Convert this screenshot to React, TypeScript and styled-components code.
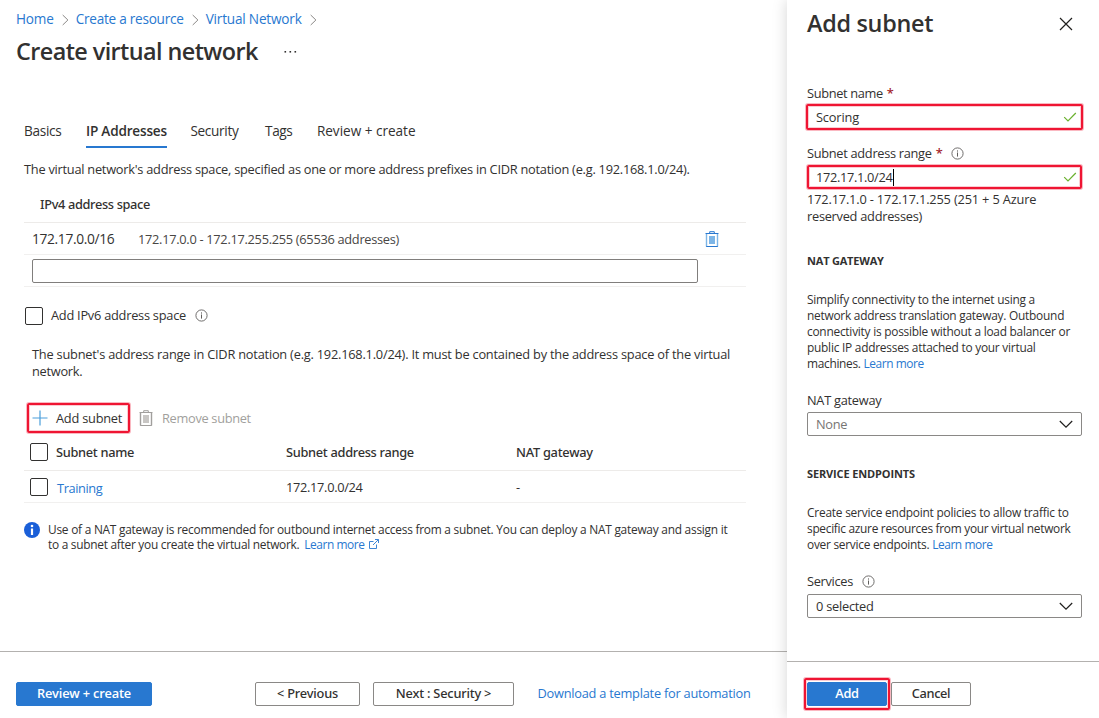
import React from 'react';
import styled, { createGlobalStyle } from 'styled-components';

const GlobalStyle = createGlobalStyle`
  * { box-sizing: border-box; }
  body { margin: 0; background: #fff; overflow: hidden; }
`;

const blue = '#2878d0';
const ink = '#323130';
const line = '#edebe9';

const Page = styled.div`
  display: flex;
  width: 1099px;
  height: 718px;
  overflow: hidden;
  font: 400 12.8px/18px 'Open Sans', 'Noto Sans', sans-serif;
  letter-spacing: -0.27px;
  color: ${ink};
`;

const Text = styled.span<{ $ls?: number; $semi?: boolean; $muted?: boolean }>`
  letter-spacing: ${p => p.$ls ?? -0.27}px;
  font-weight: ${p => (p.$semi ? 600 : 400)};
  color: ${p => (p.$muted ? '#a19f9d' : 'inherit')};
  white-space: nowrap;
`;

const Medium = styled.span<{ $ls: number }>`
  font-family: 'Noto Sans', 'Open Sans', sans-serif;
  font-weight: 500;
  letter-spacing: ${p => p.$ls}px;
  white-space: nowrap;
`;

const Link = styled.a<{ $ls?: number }>`
  letter-spacing: ${p => p.$ls ?? -0.27}px;
  color: ${blue};
  text-decoration: none;
  white-space: nowrap;
  cursor: pointer;
`;

const Main = styled.main`
  display: flex;
  flex-direction: column;
  width: 787px;
`;

const Breadcrumb = styled.nav`
  display: flex;
  align-items: center;
  height: 38px;
  padding-left: 16px;
  font-size: 13.6px;
`;

const Separator = styled.svg`
  width: 7px;
  height: 12px;
  margin: 1px 7px 0 8px;
`;

const TitleRow = styled.header`
  display: flex;
  align-items: center;
  height: 26px;
  padding-left: 16px;
  gap: 26px;
`;

const Title = styled.h1<{ $ls: number }>`
  margin: 0;
  font-size: 23.4px;
  font-weight: 600;
  line-height: 26px;
  letter-spacing: ${p => p.$ls}px;
`;

const Tabs = styled.div`
  display: flex;
  height: 32px;
  margin: 52px 0 0 24px;
  gap: 24.5px;
  font-size: 13.6px;
`;

const Tab = styled.div<{ $active?: boolean; $after?: number }>`
  display: flex;
  align-items: center;
  margin-right: ${p => p.$after ?? 0}px;
  border-bottom: 2px solid ${p => (p.$active ? blue : 'transparent')};
`;

const Content = styled.section`
  width: 722px;
  margin: 13px 0 0 24px;
  flex: 1;
`;

const Paragraph = styled.p<{ $top?: number; $left?: number }>`
  margin: ${p => p.$top ?? 0}px 0 0 ${p => p.$left ?? 0}px;
  line-height: 17px;
`;

const SpaceHeader = styled.div`
  display: flex;
  align-items: center;
  height: 37px;
  margin-top: 8px;
  padding-left: 16px;
  border-bottom: 1px solid ${line};
`;

const SpaceRow = styled.div`
  display: flex;
  align-items: center;
  height: 32px;
  padding: 0 8px;
  border-bottom: 1px solid #f1f0ef;
`;

const SpacePrefix = styled.div`
  width: 106px;
  font-size: 13.8px;
`;

const SpaceRange = styled.div`
  flex: 1;
  color: #484644;
`;

const DeleteIcon = styled.svg`
  width: 14px;
  height: 17px;
  margin: 1px 19px 0 0;
`;

const AddressInput = styled.div`
  width: 666px;
  height: 24px;
  border: 1px solid #807e7c;
  border-radius: 2px;
`;

const Option = styled.div`
  display: flex;
  align-items: center;
  height: 20px;
  margin: 19px 0 0 1px;
`;

const OptionLabel = styled.div`
  display: flex;
  align-items: center;
  height: 18px;
  margin-bottom: 2px;
`;

const Checkbox = styled.span<{ $gap: number }>`
  flex: none;
  width: 18px;
  height: 18px;
  margin-right: ${p => p.$gap}px;
  border: 1px solid ${ink};
  border-radius: 2px;
`;

const InfoGlyph = styled.svg<{ $gap: number }>`
  flex: none;
  width: 13px;
  height: 13px;
  margin-left: ${p => p.$gap}px;
`;

const Toolbar = styled.div`
  display: flex;
  align-items: center;
  height: 28px;
  margin-top: 24px;
  padding-left: 8px;
`;

const Action = styled.div<{ $width?: number; $gap: number }>`
  position: relative;
  display: flex;
  align-items: center;
  gap: ${p => p.$gap}px;
  width: ${p => (p.$width ? `${p.$width}px` : 'auto')};
`;

const Callout = styled.span<{ $inset: string }>`
  position: absolute;
  inset: ${p => p.$inset};
  border: 2px solid #ef1533;
  border-radius: 2px;
  box-shadow: 0 0 0 1px rgba(239, 21, 51, 0.3), inset 0 0 0 1px rgba(239, 21, 51, 0.22);
  pointer-events: none;
`;

const SubnetGrid = styled.div<{ $height: number; $line: string }>`
  display: grid;
  grid-template-columns: 26px 230px 230px 1fr;
  align-items: center;
  height: ${p => p.$height}px;
  padding-left: 6px;
  margin-top: ${p => (p.$height > 32 ? 2 : 0)}px;
  border-bottom: 1px solid ${p => p.$line};
`;

const SubnetLink = styled.div`
  padding: 2px 0 0 1px;
`;

const Notice = styled.div`
  display: flex;
  gap: 8px;
  margin-top: 19px;
  font-size: 11.9px;
  line-height: 15px;
`;

const NoticeIcon = styled.svg`
  flex: none;
  width: 16px;
  height: 16px;
`;

const NoticeLink = styled(Link)`
  margin-left: 2px;
`;

const ExternalIcon = styled.svg`
  width: 10px;
  height: 10px;
  margin-left: 5px;
`;

const MainFooter = styled.footer`
  display: flex;
  align-items: flex-start;
  height: 67px;
  padding: 30px 0 0 16px;
  border-top: 1px solid #b3b1af;
`;

const Button = styled.button<{ $width: number; $primary?: boolean; $after?: number }>`
  position: relative;
  flex: none;
  display: flex;
  align-items: center;
  justify-content: center;
  width: ${p => p.$width}px;
  height: 24px;
  padding: 0 0 2px;
  margin-right: ${p => p.$after ?? 0}px;
  border: 1px solid ${p => (p.$primary ? blue : '#8a8886')};
  border-radius: 2px;
  background: ${p => (p.$primary ? blue : '#fff')};
  color: ${p => (p.$primary ? '#fff' : ink)};
  font: inherit;
  line-height: 20px;
`;

const FooterLink = styled.div`
  line-height: 23px;
`;

const Panel = styled.aside`
  position: relative;
  display: flex;
  flex-direction: column;
  width: 312px;
  background: #fff;
  box-shadow: 0 0 14px rgba(0, 0, 0, 0.17);
`;

const PanelHeader = styled.header`
  display: flex;
  justify-content: space-between;
  align-items: center;
  height: 48px;
  padding: 0 26px 2px 20px;
`;

const CloseIcon = styled.svg`
  width: 14px;
  height: 14px;
  margin-top: 2px;
`;

const PanelBody = styled.div`
  flex: 1;
  width: 275px;
  margin-left: 20px;
`;

const Label = styled.label<{ $top: number; $bottom: number }>`
  display: flex;
  align-items: center;
  height: 18px;
  margin: ${p => p.$top}px 0 ${p => p.$bottom}px;
`;

const Required = styled.span`
  margin-left: 4px;
  color: #a4262c;
  font-weight: 600;
`;

const Field = styled.div`
  position: relative;
  display: flex;
  align-items: center;
  justify-content: space-between;
  height: 24px;
  padding: 0 5px 0 9px;
`;

const Value = styled.span`
  display: flex;
  align-items: center;
`;

const Caret = styled.span`
  width: 1px;
  height: 17px;
  margin-left: 1px;
  background: #000;
`;

const Glyph = styled.svg`
  width: 14px;
  height: 12px;
`;

const Heading = styled.h2<{ $top: number; $ls: number }>`
  margin: ${p => p.$top}px 0 0;
  font-size: 11px;
  font-weight: 700;
  line-height: 16px;
  letter-spacing: ${p => p.$ls}px;
`;

const Description = styled.p`
  margin: 22px 0 0;
  font-size: 11.9px;
  line-height: 16px;
  letter-spacing: -0.24px;
`;

const Select = styled.div<{ $muted?: boolean }>`
  display: flex;
  align-items: center;
  justify-content: space-between;
  height: 24px;
  padding: 0 8px;
  border: 1px solid #8a8886;
  border-radius: 2px;
  color: ${p => (p.$muted ? '#777573' : ink)};
`;

const PanelFooter = styled.footer`
  display: flex;
  height: 57px;
  padding: 20px 0 0 20px;
  border-top: 1px solid #b3b1af;
`;

const Crumb = () => (
  <Separator viewBox="0 0 7 12">
    <path d="M0.7 1 L5.9 6 L0.7 11" fill="none" stroke="#8a8886" strokeWidth="1" />
  </Separator>
);

const Info = ({ gap }: { gap: number }) => (
  <InfoGlyph $gap={gap} viewBox="0 0 13 13">
    <circle cx="6.5" cy="6.5" r="5.6" fill="none" stroke="#605e5c" strokeWidth="0.9" />
    <path d="M6.5 5.5V9.6M6.5 3.4V4.6" stroke="#605e5c" strokeWidth="1" />
  </InfoGlyph>
);

const Trash = ({ stroke, fill, side }: { stroke: string; fill: string; side: string }) => (
  <>
    <path d="M1.5 3V15.5M12.5 3V15.5" stroke={side} strokeWidth="1.4" />
    <path d="M0.5 2.5H13.5M1.2 15.5H12.8M4.7 2.5V0.7H9.3V2.5" fill="none" stroke={stroke} />
    <rect x="4" y="5" width="6" height="8" fill={fill} />
  </>
);

const Check = () => (
  <Glyph viewBox="0 0 14 12">
    <path d="M1.2 6.2L5 10L12.8 2" fill="none" stroke="#6bb12f" strokeWidth="1.2" />
  </Glyph>
);

const Chevron = () => (
  <Glyph viewBox="0 0 14 12">
    <path d="M0.8 3L7 9.2L13.2 3" fill="none" stroke="#201f1e" strokeWidth="1.2" />
  </Glyph>
);

export default function App() {
  return (
    <Page>
      <GlobalStyle />
      <Main>
        <Breadcrumb>
          <Link $ls={-0.2}>Home</Link>
          <Crumb />
          <Link $ls={-0.25}>Create a resource</Link>
          <Crumb />
          <Link $ls={-0.2}>Virtual Network</Link>
          <Crumb />
        </Breadcrumb>
        <TitleRow>
          <Title $ls={-0.58}>Create virtual network</Title>
          <svg width="13" height="3" viewBox="0 0 13 3" fill={ink}>
            <rect x="0.5" y="1" width="1.6" height="1.6" />
            <rect x="5.5" y="1" width="1.6" height="1.6" />
            <rect x="10.5" y="1" width="1.6" height="1.6" />
          </svg>
        </TitleRow>
        <Tabs>
          <Tab><Text $ls={-0.3}>Basics</Text></Tab>
          <Tab $active $after={-1}><Text $semi $ls={-0.2}>IP Addresses</Text></Tab>
          <Tab $after={2}><Text $ls={-0.3}>Security</Text></Tab>
          <Tab><Text $ls={-0.4}>Tags</Text></Tab>
          <Tab><Text $ls={-0.02}>Review + create</Text></Tab>
        </Tabs>
        <Content>
          <Paragraph>
            <Text $ls={-0.25}>The virtual network's address space, specified as one or more address prefixes in CIDR notation (e.g. 192.168.1.0/24).</Text>
          </Paragraph>
          <SpaceHeader><Medium $ls={-0.35}>IPv4 address space</Medium></SpaceHeader>
          <SpaceRow>
            <SpacePrefix><Text $ls={-0.36}>172.17.0.0/16</Text></SpacePrefix>
            <SpaceRange><Text $ls={-0.29}>172.17.0.0 - 172.17.255.255 (65536 addresses)</Text></SpaceRange>
            <DeleteIcon viewBox="0 0 14 17">
              <Trash stroke={blue} fill="#7db5e6" side="#7db5e6" />
            </DeleteIcon>
          </SpaceRow>
          <SpaceRow><AddressInput /></SpaceRow>
          <Option>
            <Checkbox $gap={8} />
            <OptionLabel>
              <Text $ls={-0.25}>Add IPv6 address space</Text>
              <Info gap={9} />
            </OptionLabel>
          </Option>
          <Paragraph $top={20} $left={8}>
            <Text $ls={-0.22}>The subnet's address range in CIDR notation (e.g. 192.168.1.0/24). It must be contained by the address space of the virtual</Text>
            <br />
            <Text>network.</Text>
          </Paragraph>
          <Toolbar>
            <Action $width={107} $gap={7}>
              <svg width="17" height="17" viewBox="0 0 17 17">
                <path d="M8 0.5V15.5M0.5 8H15.5" stroke="#4a9edb" strokeWidth="1.2" />
              </svg>
              <Text $ls={-0.23}>Add subnet</Text>
              <Callout $inset="-6px 9px -6px -5px" />
            </Action>
            <Action $gap={9}>
              <svg width="14" height="17" viewBox="0 0 14 17">
                <Trash stroke="#a19f9d" fill="#c8c6c4" side="#a19f9d" />
              </svg>
              <Text $muted $ls={-0.31}>Remove subnet</Text>
            </Action>
          </Toolbar>
          <SubnetGrid $height={37} $line={line}>
            <Checkbox $gap={0} />
            <Medium $ls={-0.3}>Subnet name</Medium>
            <Medium $ls={-0.3}>Subnet address range</Medium>
            <Medium $ls={-0.25}>NAT gateway</Medium>
          </SubnetGrid>
          <SubnetGrid $height={32} $line="#f1f0ef">
            <Checkbox $gap={0} />
            <SubnetLink><Link $ls={-0.4}>Training</Link></SubnetLink>
            <Text $ls={-0.31}>172.17.0.0/24</Text>
            <Text>-</Text>
          </SubnetGrid>
          <Notice>
            <NoticeIcon viewBox="0 0 16 16">
              <circle cx="8" cy="8" r="8" fill="#1a5fd8" />
              <path d="M8 6.5V13" stroke="#fff" strokeWidth="2.2" />
              <circle cx="8" cy="4" r="1.3" fill="#fff" />
            </NoticeIcon>
            <div>
              <Text $ls={-0.24}>Use of a NAT gateway is recommended for outbound internet access from a subnet. You can deploy a NAT gateway and assign it</Text>
              <br />
              <Text>to a subnet after you create the virtual network. </Text>{' '}
              <NoticeLink $ls={-0.42}>
                Learn more
                <ExternalIcon viewBox="0 0 10 10">
                  <path d="M4.5 2.5H0.5V9.5H7.5V5.5M6 0.5H9.5V4M9.3 0.7L4 6" fill="none" stroke={blue} strokeWidth="0.9" />
                </ExternalIcon>
              </NoticeLink>
            </div>
          </Notice>
        </Content>
        <MainFooter>
          <Button $primary $width={136} $after={103}><Text $semi $ls={-0.18}>Review + create</Text></Button>
          <Button $width={105} $after={13}><Medium $ls={-0.2}>&lt; Previous</Medium></Button>
          <Button $width={141} $after={23.5}><Medium $ls={-0.2}>Next : Security &gt;</Medium></Button>
          <FooterLink><Link $ls={-0.24}>Download a template for automation</Link></FooterLink>
        </MainFooter>
      </Main>
      <Panel>
        <PanelHeader>
          <Title $ls={-0.29}>Add subnet</Title>
          <CloseIcon viewBox="0 0 14 14">
            <path d="M1 1L13 13M13 1L1 13" stroke="#201f1e" strokeWidth="1.2" />
          </CloseIcon>
        </PanelHeader>
        <PanelBody>
          <Label $top={36} $bottom={3}>
            <Text $ls={-0.35}>Subnet name</Text><Required>*</Required>
          </Label>
          <Field>
            <Text $ls={-0.17}>Scoring</Text>
            <Check />
            <Callout $inset="-1px -1px -1px -1px" />
          </Field>
          <Label $top={15} $bottom={3}>
            <Text $ls={-0.3}>Subnet address range</Text><Required>*</Required><Info gap={9} />
          </Label>
          <Field>
            <Value><Text $ls={-0.32}>172.17.1.0/24</Text><Caret /></Value>
            <Check />
            <Callout $inset="0" />
          </Field>
          <Paragraph $top={2}>
            <Text $ls={-0.17}>172.17.1.0 - 172.17.1.255 (251 + 5 Azure</Text>
            <br />
            <Text>reserved addresses)</Text>
          </Paragraph>
          <Heading $top={28} $ls={-0.2}>NAT GATEWAY</Heading>
          <Description>
            <Text $ls={-0.24}>Simplify connectivity to the internet using a</Text><br />
            <Text $ls={-0.24}>network address translation gateway. Outbound</Text><br />
            <Text $ls={-0.24}>connectivity is possible without a load balancer or</Text><br />
            <Text $ls={-0.24}>public IP addresses attached to your virtual</Text><br />
            <Text $ls={-0.3}>machines.</Text> <Link $ls={-0.42}>Learn more</Link>
          </Description>
          <Label $top={20} $bottom={3}><Text>NAT gateway</Text></Label>
          <Select $muted><Text>None</Text><Chevron /></Select>
          <Heading $top={30} $ls={-0.14}>SERVICE ENDPOINTS</Heading>
          <Description>
            <Text $ls={-0.21}>Create service endpoint policies to allow traffic to</Text><br />
            <Text $ls={-0.29}>specific azure resources from your virtual network</Text><br />
            <Text $ls={-0.26}>over service endpoints.</Text> <Link $ls={-0.42}>Learn more</Link>
          </Description>
          <Label $top={20} $bottom={4}><Text $ls={-0.31}>Services</Text><Info gap={9} /></Label>
          <Select><Text $ls={-0.24}>0 selected</Text><Chevron /></Select>
        </PanelBody>
        <PanelFooter>
          <Button $primary $width={80} $after={4}>
            <Text $semi>Add</Text>
            <Callout $inset="-5px -4px -5px -4px" />
          </Button>
          <Button $width={80}><Medium $ls={-0.37}>Cancel</Medium></Button>
        </PanelFooter>
      </Panel>
    </Page>
  );
}
